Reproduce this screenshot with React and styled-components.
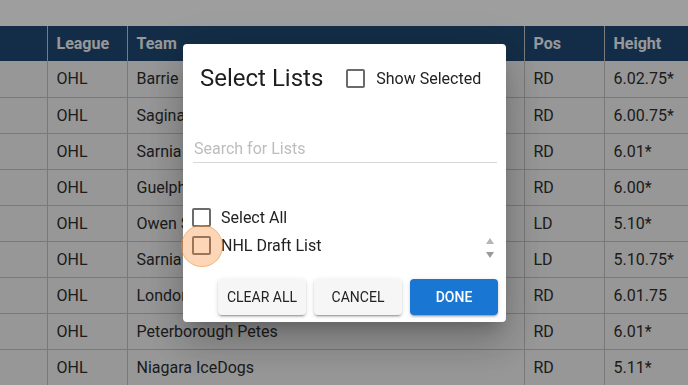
import React from "react";
import styled, { createGlobalStyle } from "styled-components";

const GlobalStyle = createGlobalStyle`
  html, body {
    margin: 0;
    padding: 0;
    background: #fff;
    font-family: Roboto, "Liberation Sans", Arial, sans-serif;
    overflow: hidden;
  }
`;

const Page = styled.div`
  width: 688px;
  height: 385px;
  padding-top: 26px;
  box-sizing: border-box;
  overflow: hidden;
`;

const Table = styled.table`
  border-collapse: collapse;
  width: 720px;
  table-layout: fixed;
  font-size: 16px;
  color: #2e2e2e;
`;

const Th = styled.th`
  box-sizing: border-box;
  background: #204a75;
  color: #f4f6f8;
  font-weight: 700;
  text-align: left;
  height: 35px;
  padding: 0 0 0 9px;
  border-left: 1px solid #c9c9c9;
  width: ${(p) => p.w}px;
  &:first-child { border-left: none; }
`;

const Td = styled.td`
  box-sizing: border-box;
  background: #f4f4f4;
  height: 36px;
  padding: 0 0 0 9px;
  border-left: 1px solid #c4c4c4;
  border-bottom: 1px solid #c4c4c4;
  white-space: nowrap;
  overflow: hidden;
  &:first-child { border-left: none; }
`;

const Backdrop = styled.div`
  position: fixed;
  inset: 0;
  background: rgba(0, 0, 0, 0.38);
  display: flex;
  justify-content: center;
  align-items: flex-start;
  padding-top: 44px;
  padding-left: 1px;
  box-sizing: border-box;
`;

const Modal = styled.div`
  width: 323px;
  background: #fff;
  border-radius: 4px;
  box-shadow: 0 11px 15px -7px rgba(0,0,0,0.2), 0 24px 38px 3px rgba(0,0,0,0.14), 0 9px 46px 8px rgba(0,0,0,0.12);
  padding-bottom: 7px;
`;

const TitleRow = styled.div`
  display: flex;
  align-items: center;
  padding: 20px 17px 0 17px;
  height: 28px;
`;

const Title = styled.h2`
  margin: 0 23px 0 0;
  font-size: 24px;
  font-weight: 400;
  color: #1e1e1e;
`;

const Check = styled.span`
  position: relative;
  display: inline-block;
  width: 19px;
  height: 19px;
  box-sizing: border-box;
  border: 2px solid #6b6b6b;
  border-radius: 2px;
  flex-shrink: 0;
  margin-right: ${(p) => p.gap || 10}px;
`;

const Ripple = styled.span`
  position: absolute;
  left: -13px;
  top: -13px;
  width: 42px;
  height: 42px;
  border-radius: 50%;
  background: rgba(246, 138, 46, 0.35);
  border: 1px solid rgba(240, 140, 60, 0.45);
  box-sizing: border-box;
`;

const Label = styled.label`
  display: flex;
  align-items: center;
  font-size: 16px;
  color: #222;
`;

const Search = styled.input`
  display: block;
  margin: 42px 10px 0 10px;
  width: 303px;
  height: 28px;
  border: none;
  border-bottom: 1px solid #d8d8d8;
  padding: 0 0 0 1px;
  font-family: inherit;
  font-size: 16px;
  outline: none;
  &::placeholder { color: #bdbdbd; }
`;

const List = styled.div`
  margin-top: 40px;
  padding: 0 9px;
`;

const Row = styled.div`
  height: 28px;
  display: flex;
  align-items: center;
`;

const ScrollArea = styled.div`
  display: flex;
  justify-content: space-between;
  height: 34px;
  align-items: flex-start;
`;

const Arrows = styled.div`
  display: flex;
  flex-direction: column;
  gap: 8px;
  padding-top: 7px;
  margin-right: 3px;
`;

const Arrow = styled.span`
  width: 0;
  height: 0;
  border-left: 4.5px solid transparent;
  border-right: 4.5px solid transparent;
  ${(p) => (p.down ? "border-top: 6px solid #9a9a9a;" : "border-bottom: 6px solid #b5b5b5;")}
`;

const Actions = styled.div`
  display: flex;
  justify-content: flex-end;
  gap: 8px;
  padding: 0 8px;
  margin-top: 14px;
`;

const Button = styled.button`
  width: 88px;
  height: 36px;
  border: none;
  border-radius: 4px;
  font-family: inherit;
  font-size: 14px;
  font-weight: ${(p) => (p.primary ? 500 : 400)};
  text-transform: uppercase;
  color: ${(p) => (p.primary ? "#fff" : "#222")};
  background: ${(p) => (p.primary ? "#1976d2" : "#f6f6f6")};
  box-shadow: 0 3px 1px -2px rgba(0,0,0,0.2), 0 2px 2px 0 rgba(0,0,0,0.14), 0 1px 5px 0 rgba(0,0,0,0.12);
`;

const rows = [
  ["OHL", "Barrie Colts", "RD", "6.02.75*"],
  ["OHL", "Saginaw Spirit", "RD", "6.00.75*"],
  ["OHL", "Sarnia Sting", "RD", "6.01*"],
  ["OHL", "Guelph Storm", "RD", "6.00*"],
  ["OHL", "Owen Sound Attack", "LD", "5.10*"],
  ["OHL", "Sarnia Sting", "LD", "5.10.75*"],
  ["OHL", "London Knights", "RD", "6.01.75"],
  ["OHL", "Peterborough Petes", "RD", "6.01*"],
  ["OHL", "Niagara IceDogs", "RD", "5.11*"],
];

export default function App() {
  return (
    <>
      <GlobalStyle />
      <Page>
        <Table>
          <thead>
            <tr>
              <Th w={47}></Th>
              <Th w={80}>League</Th>
              <Th w={397}>Team</Th>
              <Th w={80}>Pos</Th>
              <Th w={116}>Height</Th>
            </tr>
          </thead>
          <tbody>
            {rows.map((r, i) => (
              <tr key={i}>
                <Td></Td>
                {r.map((c, j) => (
                  <Td key={j}>{c}</Td>
                ))}
              </tr>
            ))}
          </tbody>
        </Table>
      </Page>
      <Backdrop>
        <Modal>
          <TitleRow>
            <Title>Select Lists</Title>
            <Label>
              <Check gap={11} />
              Show Selected
            </Label>
          </TitleRow>
          <Search placeholder="Search for Lists" />
          <List>
            <Row>
              <Label>
                <Check />
                Select All
              </Label>
            </Row>
            <ScrollArea>
              <Row>
                <Label>
                  <Check>
                    <Ripple />
                  </Check>
                  NHL Draft List
                </Label>
              </Row>
              <Arrows>
                <Arrow />
                <Arrow down />
              </Arrows>
            </ScrollArea>
          </List>
          <Actions>
            <Button>Clear All</Button>
            <Button>Cancel</Button>
            <Button primary>Done</Button>
          </Actions>
        </Modal>
      </Backdrop>
    </>
  );
}
